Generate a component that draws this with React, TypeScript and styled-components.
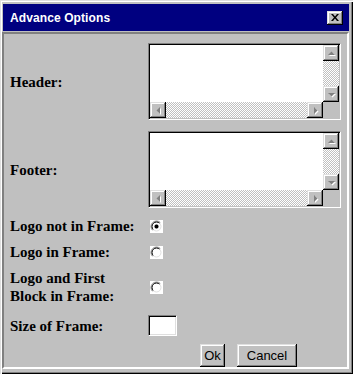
import styled, { createGlobalStyle } from "styled-components";

const GlobalStyle = createGlobalStyle`
  html, body {
    margin: 0;
    background: #c0c0c0;
  }
`;

const raised = `
  box-shadow: inset -1px -1px #000, inset 1px 1px #dfdfdf,
    inset -2px -2px #808080, inset 2px 2px #fff;
`;

const Window = styled.div`
  width: 353px;
  height: 374px;
  box-sizing: border-box;
  padding: 3px 4px 3px 3px;
  display: flex;
  flex-direction: column;
  background: #c0c0c0;
  box-shadow: inset 1px 1px #dfdfdf, inset 2px 2px #fff, inset -1px -1px #000,
    inset -2px -2px #808080;
`;

const TitleBar = styled.div`
  height: 27px;
  margin-top: 1px;
  flex-shrink: 0;
  background: #000080;
  display: flex;
  align-items: center;
  justify-content: space-between;
  padding: 0 6px 0 7px;
`;

const Title = styled.span`
  color: #fff;
  font: bold 12px "Liberation Sans", Arial, sans-serif;
  letter-spacing: 0.1px;
`;

const CloseButton = styled.div`
  width: 16px;
  height: 14px;
  background: #c0c0c0;
  display: flex;
  align-items: center;
  justify-content: center;
  ${raised}
`;

const Panel = styled.div`
  flex: 1;
  margin: 1px 0 2px -1px;
  border: 2px solid;
  border-color: #808080 #fff #fff #808080;
  padding: 9px 0 0 6px;
  display: flex;
  flex-direction: column;
`;

const Row = styled.div<{ $h: number; $gap?: number }>`
  display: grid;
  grid-template-columns: 138px auto;
  align-items: center;
  height: ${(p) => p.$h}px;
  margin-top: ${(p) => p.$gap ?? 0}px;
`;

const Label = styled.div`
  font: bold 15px "Liberation Serif", "Times New Roman", serif;
  line-height: 18px;
  color: #000;
`;

const TextBox = styled.div`
  width: 193px;
  height: 77px;
  box-sizing: border-box;
  border: 1px solid;
  border-color: #808080 #fff #fff #808080;
  padding: 1px;
  box-shadow: inset 1px 1px #000, inset -1px -1px #c0c0c0;
  display: grid;
  grid-template-columns: 1fr 16px;
  grid-template-rows: 1fr 16px;
`;

const TextArea = styled.div`
  background: #fff;
`;

const Track = styled.div`
  flex: 1;
  background: repeating-conic-gradient(#c0c0c0 0 25%, #fff 0 50%) 0 0 / 2px 2px;
`;

const VBar = styled.div`
  display: flex;
  flex-direction: column;
`;

const HBar = styled.div`
  display: flex;
`;

const Corner = styled.div`
  background: #c0c0c0;
`;

const ArrowButton = styled.div`
  width: 16px;
  height: 16px;
  flex-shrink: 0;
  background: #c0c0c0;
  display: flex;
  align-items: center;
  justify-content: center;
  ${raised}
`;

const RadioWrap = styled.div`
  margin-left: 2px;
  width: 13px;
  height: 13px;
  display: flex;
`;

const SmallInput = styled.div`
  width: 29px;
  height: 21px;
  box-sizing: border-box;
  background: #fff;
  border: 1px solid;
  border-color: #808080 #fff #fff #808080;
  box-shadow: inset 1px 1px #000, inset -1px -1px #dfdfdf;
`;

const Actions = styled.div`
  display: flex;
  gap: 12px;
  margin-left: 52px;
`;

const Button = styled.button<{ $w: number }>`
  width: ${(p) => p.$w}px;
  height: 23px;
  padding: 0;
  border: none;
  background: #c0c0c0;
  color: #000;
  font: 13px "Liberation Sans", Arial, sans-serif;
  ${raised}
`;

type Dir = "up" | "down" | "left" | "right";

const arrowPoints: Record<Dir, string> = {
  up: "4,9 11,9 7.5,5.5",
  down: "4,6 11,6 7.5,9.5",
  left: "9,4 9,11 5.5,7.5",
  right: "6,4 6,11 9.5,7.5",
};

function Arrow({ dir }: { dir: Dir }) {
  return (
    <svg width="14" height="14" viewBox="0 0 14 14">
      <polygon points={arrowPoints[dir]} fill="#fff" transform="translate(1 1)" />
      <polygon points={arrowPoints[dir]} fill="#808080" />
    </svg>
  );
}

function ScrollText() {
  return (
    <TextBox>
      <TextArea />
      <VBar>
        <ArrowButton>
          <Arrow dir="up" />
        </ArrowButton>
        <Track />
        <ArrowButton>
          <Arrow dir="down" />
        </ArrowButton>
      </VBar>
      <HBar>
        <ArrowButton>
          <Arrow dir="left" />
        </ArrowButton>
        <Track />
        <ArrowButton>
          <Arrow dir="right" />
        </ArrowButton>
      </HBar>
      <Corner />
    </TextBox>
  );
}

function Radio({ checked }: { checked?: boolean }) {
  const tl = (r: number) =>
    `M ${6.5 - r * 0.7071} ${6.5 + r * 0.7071} A ${r} ${r} 0 0 1 ${6.5 + r * 0.7071} ${6.5 - r * 0.7071}`;
  const br = (r: number) =>
    `M ${6.5 + r * 0.7071} ${6.5 - r * 0.7071} A ${r} ${r} 0 0 1 ${6.5 - r * 0.7071} ${6.5 + r * 0.7071}`;
  return (
    <RadioWrap>
      <svg width="13" height="13" viewBox="0 0 13 13">
        <rect width="13" height="13" fill="#fff" />
        <path d={tl(5.5)} stroke="#808080" fill="none" />
        <path d={br(5.5)} stroke="#fff" fill="none" />
        <path d={tl(4.5)} stroke="#000" fill="none" />
        <path d={br(4.5)} stroke="#dfdfdf" fill="none" />
        {checked && <rect x="5" y="5" width="3" height="3" fill="#000" />}
        {checked && <rect x="4.5" y="5.5" width="4" height="2" fill="#000" />}
        {checked && <rect x="5.5" y="4.5" width="2" height="4" fill="#000" />}
      </svg>
    </RadioWrap>
  );
}

export default function App() {
  return (
    <>
      <GlobalStyle />
      <Window>
        <TitleBar>
          <Title>Advance Options</Title>
          <CloseButton>
            <svg width="8" height="7" viewBox="0 0 8 7">
              <path d="M0 0h2l2 2.5L6 0h2L5 3.5 8 7H6L4 4.5 2 7H0l3-3.5z" fill="#000" />
            </svg>
          </CloseButton>
        </TitleBar>
        <Panel>
          <Row $h={77}>
            <Label>Header:</Label>
            <ScrollText />
          </Row>
          <Row $h={77} $gap={11}>
            <Label>Footer:</Label>
            <ScrollText />
          </Row>
          <Row $h={26} $gap={5}>
            <Label>Logo not in Frame:</Label>
            <Radio checked />
          </Row>
          <Row $h={26}>
            <Label>Logo in Frame:</Label>
            <Radio />
          </Row>
          <Row $h={44}>
            <Label>
              Logo and First
              <br />
              Block in Frame:
            </Label>
            <Radio />
          </Row>
          <Row $h={33}>
            <Label>Size of Frame:</Label>
            <SmallInput />
          </Row>
          <Row $h={23} $gap={2}>
            <span />
            <Actions>
              <Button $w={25}>Ok</Button>
              <Button $w={60}>Cancel</Button>
            </Actions>
          </Row>
        </Panel>
      </Window>
    </>
  );
}
